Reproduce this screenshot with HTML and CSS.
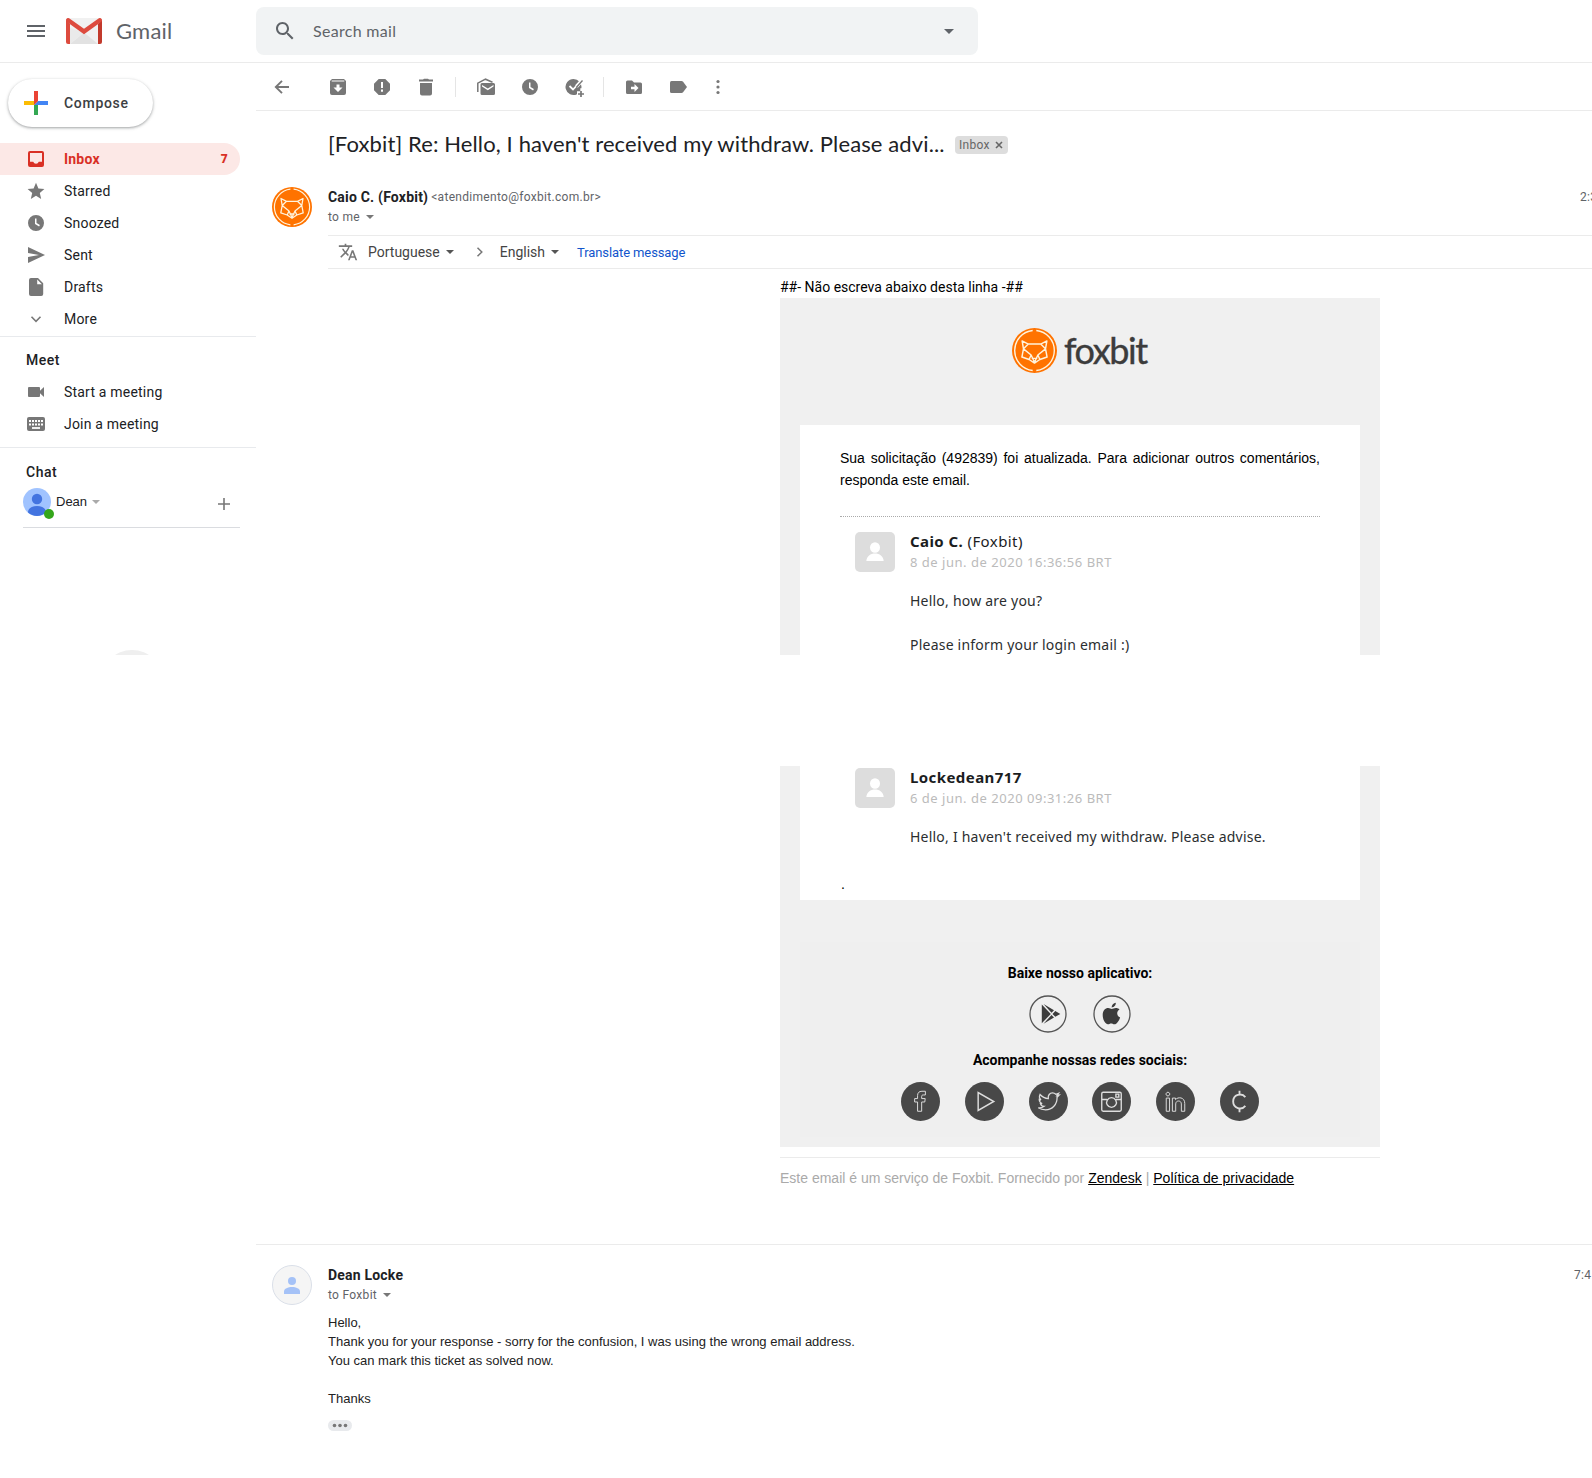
FILE: index.html
```html
<!DOCTYPE html>
<html lang="en">
<head>
<meta charset="utf-8">
<title>Gmail</title>
<link rel="stylesheet" href="styles.css">
</head>
<body>
<svg width="0" height="0" class="defs">
  <symbol id="fox" viewBox="0 0 40 40">
    <circle cx="20" cy="20" r="20" fill="#ff7300"/>
    <path d="M18.4 2.2A17.9 17.9 0 0 0 18.4 37.8M21.6 2.2A17.9 17.9 0 0 1 21.6 37.8" fill="none" stroke="#fff3dc" stroke-width="1.2"/>
    <path d="M9 11.500l5.500 2.800h11L31 11.500l-1.200 7 1.400 7.300-6.400 2.200-4.800 3.200-4.800-3.200-6.400-2.200 1.400-7.300zM14.500 14.300L10.200 18.500l6.800 5.500 3 6.500 3-6.500 6.800-5.500-4.300-4.200M15.200 28l1.800-4M24.800 28l-1.800-4M17.500 27h5" fill="none" stroke="#fff3dc" stroke-width="1.300" stroke-linejoin="round"/>
  </symbol>
  <symbol id="clock" viewBox="0 0 20 20"><path fill-rule="evenodd" d="M10 2a8 8 0 1 0 0 16 8 8 0 0 0 0-16zM9 5.500h1.500v4.600l3.400 2-.8 1.300L9 11z"/></symbol>
  <symbol id="caret" viewBox="0 0 8 4"><path d="M0 0h8L4 4z"/></symbol>
  <symbol id="person" viewBox="0 0 40 40"><ellipse cx="20" cy="15.500" rx="5" ry="5.300"/><path d="M11.300 29c.5-5 4.200-7.500 8.700-7.500s8.200 2.500 8.700 7.500z"/></symbol>
</svg>

<header class="header">
  <svg class="menu" viewBox="0 0 18 12"><path d="M0 0h18v2H0zM0 5h18v2H0zM0 10h18v2H0z"/></svg>
  <svg class="logo" viewBox="0 0 36 26">
    <path d="M2 0h32v26H2z" fill="#f1f1f1"/><path d="M4 26L18 14.500 32 26z" fill="#e2e2e2"/><path d="M18 14.500L4 26V10z" fill="#eaeaea"/>
    <path d="M0 2v22a2 2 0 0 0 2 2h2V6z" fill="#dd4b3e"/><path d="M36 2v22a2 2 0 0 1-2 2h-2V6z" fill="#c23a2c"/>
    <path d="M0 2C0 .3 2 -.6 3.500 .4L18 10.800 32.500 .4C34 -.6 36 .3 36 2c0 1-.4 1.600-1 2L18 16.200 1 4C.4 3.600 0 3 0 2z" fill="#dd4b3e"/>
  </svg>
  <span class="brand">Gmail</span>
  <div class="search">
    <svg class="search-icon" viewBox="0 0 24 24"><path d="M15.500 14h-.79l-.28-.27C15.410 12.590 16 11.110 16 9.500 16 5.910 13.090 3 9.500 3S3 5.910 3 9.500 5.910 16 9.500 16c1.610 0 3.090-.59 4.230-1.570l.27.28v.79l5 4.990L20.490 19l-4.990-5zm-6 0C7.010 14 5 11.990 5 9.500S7.010 5 9.500 5 14 7.010 14 9.500 11.990 14 9.500 14z"/></svg>
    <span class="placeholder">Search mail</span>
    <svg class="search-caret"><use href="#caret"/></svg>
  </div>
</header>

<div class="page">
  <aside class="sidebar">
    <div class="compose">
      <svg viewBox="0 0 24 24" class="plus"><path d="M0 10h10.500L14 10l-4 4H0z" fill="#fbbc04"/><path d="M10 14h4v10h-4z" fill="#34a853"/><path d="M14 10h10v4H10z" fill="#4285f4"/><path d="M10 0h4v10l-4 4z" fill="#ea4335"/></svg>
      <span>Compose</span>
    </div>
    <nav class="nav">
      <div class="item active"><svg viewBox="0 0 20 20"><path fill-rule="evenodd" d="M4 2h12a2 2 0 0 1 2 2v12a2 2 0 0 1-2 2H4a2 2 0 0 1-2-2V4a2 2 0 0 1 2-2zm0 2v8.800h3.200a3 3 0 0 0 5.600 0H16V4z"/></svg><span>Inbox</span><b>7</b></div>
      <div class="item"><svg viewBox="0 0 20 20"><path d="M10 1.800l2.400 5.700 6 .5-4.600 4 1.400 5.900L10 14.700l-5.200 3.200L6.200 12 1.600 8l6-.5z"/></svg><span>Starred</span></div>
      <div class="item"><svg><use href="#clock"/></svg><span>Snoozed</span></div>
      <div class="item"><svg viewBox="0 0 20 20"><path d="M2 2l17 8-17 8v-6l11-2L2 8z"/></svg><span>Sent</span></div>
      <div class="item"><svg viewBox="0 0 20 20"><path fill-rule="evenodd" d="M5 1h7l5.200 5.200V17a2 2 0 0 1-2 2H5a2 2 0 0 1-2-2V3a2 2 0 0 1 2-2zm6.200 1.500v4.700h4.700z"/></svg><span>Drafts</span></div>
      <div class="item"><svg viewBox="0 0 20 20"><path d="M5.500 7.800L10 12.300l4.500-4.500" fill="none" stroke="#777" stroke-width="1.600"/></svg><span>More</span></div>
    </nav>
    <section class="meet">
      <h2>Meet</h2>
      <div class="item"><svg viewBox="0 0 20 20"><path d="M3 5h10a1 1 0 0 1 1 1v2.800L18 5v10l-4-3.800V14a1 1 0 0 1-1 1H3a1 1 0 0 1-1-1V6a1 1 0 0 1 1-1z"/></svg><span>Start a meeting</span></div>
      <div class="item"><svg viewBox="0 0 20 20"><path d="M3 3h14a2 2 0 0 1 2 2v10a2 2 0 0 1-2 2H3a2 2 0 0 1-2-2V5a2 2 0 0 1 2-2z"/><path d="M3 7h14M3 10.500h14" stroke="#fff" stroke-width="2" stroke-dasharray="2 1"/><path d="M6 14h8" stroke="#fff" stroke-width="1.800"/></svg><span>Join a meeting</span></div>
    </section>
    <section class="chat">
      <h2>Chat</h2>
      <div class="user">
        <svg class="face" viewBox="0 0 32 31"><circle cx="14" cy="14" r="14" fill="#a0c3ff"/><circle cx="14" cy="11" r="5.200" fill="#4374e0"/><path d="M5 24.500c0-4.500 4-6.500 9-6.500s9 2 9 6.500A14 14 0 0 1 14 28a14 14 0 0 1-9-3.500z" fill="#4374e0"/><circle cx="26" cy="26" r="5" fill="#34a61b"/></svg>
        <span>Dean</span><svg class="dim-caret"><use href="#caret"/></svg>
        <svg class="add" viewBox="0 0 12 12"><path d="M6 0v12M0 6h12" stroke="#777" stroke-width="1.600"/></svg>
      </div>
      <div class="peek"><i></i></div>
    </section>
  </aside>

  <main class="main">
    <div class="toolbar">
      <span class="btn back"><svg viewBox="0 0 20 20"><path d="M17 10H4.500M10 3.800L3.800 10l6.200 6.200" fill="none" stroke="#777" stroke-width="1.900"/></svg></span>
      <span class="btn"><svg viewBox="0 0 20 20"><path fill-rule="evenodd" d="M4 2h12l2 2v12a2 2 0 0 1-2 2H4a2 2 0 0 1-2-2V4zm-.3 1.600v1h12.600v-1zM8.500 7.500v3h-3L10 15l4.500-4.500h-3v-3z"/></svg></span>
      <span class="btn"><svg viewBox="0 0 20 20"><path fill-rule="evenodd" d="M6.700 2h6.600L18 6.700v6.600L13.300 18H6.700L2 13.300V6.700zM9 5v6h2V5zm0 7.500v2.200h2v-2.200z"/></svg></span>
      <span class="btn"><svg viewBox="0 0 20 20"><path d="M3 2.500h4L8 1.800h4l1 .7h4v2H3zM4 6h12v10.500a2 2 0 0 1-2 2H6a2 2 0 0 1-2-2z"/></svg></span>
      <i class="divider"></i>
      <span class="btn"><svg viewBox="0 0 20 20"><path fill-rule="evenodd" d="M6 6h11.500A1.500 1.500 0 0 1 19 7.500v9a1.500 1.500 0 0 1-1.500 1.500H6a1.500 1.500 0 0 1-1.500-1.500v-9A1.500 1.500 0 0 1 6 6zm0 2v1.500l5.800 3.700 5.700-3.700V8l-5.700 3.600z"/><path d="M1.800 15V6.200L9.500 2.200l7 3" fill="none" stroke="#777" stroke-width="1.500"/></svg></span>
      <span class="btn"><svg><use href="#clock"/></svg></span>
      <span class="btn"><svg class="task" viewBox="0 0 20 20"><path d="M9.500 2a8 8 0 1 0 3.500 15.200v-3h3.300v-3h1.100A8 8 0 0 0 9.500 2z"/><path d="M12.500 9.500l5.500-6" fill="none" stroke="#fff" stroke-width="3.600"/><path d="M5.500 9l3.500 3.500L16.500 4.500" fill="none" stroke="#fff" stroke-width="1.800"/><path d="M12.500 10.300L18.500 3.500" stroke="#777" stroke-width="1.300"/><path d="M17 14v6M14 17h6" stroke="#777" stroke-width="1.700"/></svg></span>
      <i class="divider"></i>
      <span class="btn"><svg viewBox="0 0 20 20"><path fill-rule="evenodd" d="M3.500 3.500H8l2 2h6.500A1.500 1.500 0 0 1 18 7v8.500a1.500 1.500 0 0 1-1.500 1.500h-13A1.500 1.500 0 0 1 2 15.500V5a1.500 1.500 0 0 1 1.500-1.500zM10.500 7v2.800H7v2.400h3.500V15l4-4z"/></svg></span>
      <span class="btn"><svg viewBox="0 0 20 20"><path d="M3.500 4h10a2 2 0 0 1 1.600.8L19 10l-3.900 5.200a2 2 0 0 1-1.600.8h-10A1.500 1.500 0 0 1 2 14.500v-9A1.500 1.500 0 0 1 3.500 4z"/></svg></span>
      <span class="btn more"><svg viewBox="0 0 20 20"><circle cx="10" cy="4.500" r="1.600"/><circle cx="10" cy="10" r="1.600"/><circle cx="10" cy="15.500" r="1.600"/></svg></span>
    </div>

    <div class="subject"><h1>[Foxbit] Re: Hello, I haven't received my withdraw. Please advi...</h1><span class="label"><span>Inbox</span><svg viewBox="0 0 8 8"><path d="M1 1l6 6M7 1L1 7" stroke="#666" stroke-width="1.600"/></svg></span></div>

    <article class="message">
      <svg class="avatar"><use href="#fox"/></svg>
      <div class="content">
        <div class="from"><b>Caio C. (Foxbit)</b><span class="addr">&lt;atendimento@foxbit.com.br&gt;</span><time>2:3</time></div>
        <div class="to"><span>to me</span><svg><use href="#caret"/></svg></div>
        <div class="translate">
          <svg class="lang" viewBox="0 0 24 24"><path d="M12.870 15.070l-2.540-2.510.03-.03c1.740-1.940 2.980-4.170 3.710-6.530H17V4h-7V2H8v2H1v1.990h11.170C11.500 7.920 10.440 9.750 9 11.350 8.070 10.320 7.300 9.190 6.690 8h-2c.73 1.630 1.730 3.170 2.980 4.560l-5.090 5.020L4 19l5-5 3.110 3.110.76-2.040zM18.500 10h-2L12 22h2l1.120-3h4.750L21 22h2l-4.500-12zm-2.620 7l1.620-4.330L19.120 17h-3.240z"/></svg>
          <span>Portuguese</span><svg class="c"><use href="#caret"/></svg>
          <svg class="chev" viewBox="0 0 8 10"><path d="M1.500 .8L5.800 5 1.500 9.200" fill="none" stroke="#777" stroke-width="1.500"/></svg>
          <span>English</span><svg class="c"><use href="#caret"/></svg>
          <a>Translate message</a>
        </div>
        <div class="mail">
          <p class="noreply">##- Não escreva abaixo desta linha -##</p>
          <div class="sheet first">
            <div class="foxbit"><svg><use href="#fox"/></svg><span>foxbit</span></div>
            <div class="paper">
              <p class="intro">Sua solicitação (492839) foi atualizada. Para adicionar outros comentários, responda este email.</p>
              <div class="comment">
                <svg class="pic"><use href="#person"/></svg>
                <div><h3><b>Caio C.</b> (Foxbit)</h3><p class="date">8 de jun. de 2020 16:36:56 BRT</p><p class="say">Hello, how are you?</p><p class="say">Please inform your login email :)</p></div>
              </div>
            </div>
          </div>
          <div class="sheet second">
            <div class="paper">
              <div class="comment">
                <svg class="pic"><use href="#person"/></svg>
                <div><h3><b>Lockedean717</b></h3><p class="date">6 de jun. de 2020 09:31:26 BRT</p><p class="say">Hello, I haven't received my withdraw. Please advise.</p></div>
              </div>
              <p class="dot">.</p>
            </div>
            <div class="links">
              <h4>Baixe nosso aplicativo:</h4>
              <div class="apps">
                <svg viewBox="0 0 40 40"><circle cx="20" cy="20" r="18" fill="none" stroke="#555" stroke-width="1.300"/><path d="M13.800 10.500v18.800l9-9.400zM15.500 10l8 8.800 2.500-2.600zM15.500 29.800l8-8.800 2.500 2.600zM24.500 19.900l2.800-2.900 5 2.900-5 2.900z" fill="#3c3c3c"/></svg>
                <svg viewBox="0 0 40 40"><circle cx="20" cy="20" r="18" fill="none" stroke="#555" stroke-width="1.300"/><path d="M27.500 15.500c-3.300 2-3 6.400.6 8-1 3.200-3.300 6.800-5.600 6.800-1.400 0-1.800-.8-3.300-.8s-2 .8-3.300.8c-2.400 0-5.200-4.500-5.200-9.200 0-4.500 2.700-7 5.500-7 1.500 0 2.600.9 3.600.9s2.300-1 4.100-1c1.400 0 2.800.5 3.600 1.500zM19.600 13.500c0-2.600 2-4.600 4.200-4.800.2 2.400-1.800 4.800-4.200 4.800z" fill="#3c3c3c"/></svg>
              </div>
              <h4>Acompanhe nossas redes sociais:</h4>
              <div class="social">
                <svg viewBox="0 0 40 40"><circle cx="20" cy="20" r="20"/><path d="M17 30V20.500h-3V17h3v-3c0-3 1.500-4.500 4.500-4.500H25v3.800h-2c-1.400 0-1.800.4-1.800 1.600V17h3.600l-.4 3.500h-3.200V30z"/></svg>
                <svg viewBox="0 0 40 40"><circle cx="20" cy="20" r="20"/><path stroke-width="1.500" d="M13.500 10.800v18.400l16-9.200z"/></svg>
                <svg viewBox="0 0 40 40"><circle cx="20" cy="20" r="20"/><path stroke-width="1.300" d="M9.500 26.500c2.500.3 4.500-.3 6-1.500-2 0-3.300-1.200-3.800-2.800h1.800c-2-.8-3-2.300-3-4.400l1.800.5c-1.800-1.600-2-3.500-1-5.500 2.300 2.600 5 4 8.500 4.200-.6-3.400 1.500-5.800 4.300-5.800 1.400 0 2.500.5 3.400 1.400l2.800-1-1.600 2.300 2.200-.5-2.100 2.200c.2 7.500-5 13-11.800 13-2.800 0-5.300-.7-7.500-2.100z"/></svg>
                <svg viewBox="0 0 40 40"><circle cx="20" cy="20" r="20"/><path stroke-width="1.400" d="M11.500 10.500h17a1.500 1.500 0 0 1 1.500 1.500v16.500a1.500 1.500 0 0 1-1.500 1.500h-17a1.500 1.500 0 0 1-1.500-1.500V12a1.500 1.500 0 0 1 1.500-1.500zM10 18h5.500M24.500 18H30M24.500 12.500h3v3h-3zM20 16a5 5 0 1 0 .01 0z"/></svg>
                <svg viewBox="0 0 40 40"><circle cx="20" cy="20" r="20"/><path d="M10.500 16.500h3.400V30h-3.400zM12.200 10.500a1.900 1.900 0 1 0 .01 0zM16.800 16.500H20v1.600c2.500-3.200 9.500-2.700 9.500 3.900v8H26v-7.500c0-4-5.800-4-5.800 0V30h-3.400z"/></svg>
                <svg viewBox="0 0 40 40"><circle cx="20" cy="20" r="20"/><path stroke-width="1.900" d="M26 15.500c-4-5-12.500-2.500-12.500 4.500s8.500 9.500 12.500 4.500M20 9v4M20 27v4"/></svg>
              </div>
            </div>
          </div>
          <p class="powered">Este email é um serviço de Foxbit. Fornecido por <a>Zendesk</a> | <a>Política de privacidade</a></p>
        </div>
      </div>
    </article>

    <article class="message reply">
      <svg class="avatar" viewBox="0 0 40 40"><circle cx="20" cy="20" r="19.500" fill="#f5f5f5" stroke="#dadfe8"/><circle cx="20" cy="16" r="4" fill="#a5c2f7"/><path d="M12 29v-2.500c0-3 4-4.500 8-4.500s8 1.500 8 4.500V29z" fill="#a5c2f7"/></svg>
      <div class="content">
        <div class="from"><b>Dean Locke</b><time>7:4</time></div>
        <div class="to"><span>to Foxbit</span><svg><use href="#caret"/></svg></div>
        <div class="body">Hello,<br>Thank you for your response - sorry for the confusion, I was using the wrong email address.<br>You can mark this ticket as solved now.<br><br>Thanks</div>
        <svg class="dots" viewBox="0 0 24 11"><rect width="24" height="11" rx="5.500" fill="#e8eaed"/><circle cx="6.500" cy="5.500" r="1.800"/><circle cx="12" cy="5.500" r="1.800"/><circle cx="17.500" cy="5.500" r="1.800"/></svg>
      </div>
    </article>
  </main>
</div>
</body>
</html>
```
FILE: styles.css
```css
* { box-sizing: border-box; }
html, body { margin: 0; padding: 0; }
body { width: 1592px; height: 1478px; overflow: hidden; background: #fff; color: #202124; font-family: Roboto, sans-serif; font-size: 14px; }
h1, h2, h3, h4, p { margin: 0; font-weight: 400; }
svg { display: block; flex: none; fill: #777; }
.defs { position: absolute; }

.header { display: flex; align-items: center; height: 63px; border-bottom: 1px solid #ebebeb; }
.menu { width: 18px; height: 12px; margin-left: 27px; fill: #5f6368; }
.logo { width: 36px; height: 26px; margin-left: 21px; }
.brand { width: 140px; margin-left: 14px; color: #5f6368; font: 22px/28px Lato, sans-serif; letter-spacing: .2px; }
.search { display: flex; align-items: center; width: 722px; height: 48px; border-radius: 8px; background: #f1f3f4; }
.search svg { fill: #5f6368; }
.search-icon { width: 24px; height: 24px; margin-left: 17px; }
.placeholder { margin-left: 16px; color: #5f6368; font: 16px/24px Lato, sans-serif; letter-spacing: .3px; }
.search-caret { width: 10px; height: 5px; margin-left: auto; margin-right: 24px; }

.page { display: flex; }
.sidebar { flex: none; width: 256px; padding-top: 16px; }
.compose { display: flex; align-items: center; width: 145px; height: 48px; margin: 0 0 16px 8px; padding-left: 16px; border-radius: 24px; box-shadow: 0 1px 2px rgba(60,64,67,.3), 0 1px 3px 1px rgba(60,64,67,.15); color: #3c4043; font: 500 14px/20px Roboto, sans-serif; letter-spacing: .7px; }
.plus { width: 24px; height: 24px; margin-right: 16px; }
.item { display: flex; align-items: center; width: 240px; height: 32px; padding: 0 12px 0 26px; letter-spacing: .2px; }
.item svg { width: 20px; height: 20px; margin-right: 18px; }
.item b { margin-left: auto; font-size: 12px; }
.active { border-radius: 0 16px 16px 0; background: #fce8e6; color: #d93025; font-weight: 700; }
.active svg { fill: #d93025; }
.nav { height: 194px; border-bottom: 1px solid #e8eaed; }
.meet { height: 111px; padding-top: 7px; border-bottom: 1px solid #e8eaed; }
.sidebar h2 { padding-left: 26px; font: 500 14px/32px Roboto, sans-serif; letter-spacing: .5px; }
.chat { padding-top: 8px; }
.user { display: flex; height: 40px; margin: 0 16px 0 23px; border-bottom: 1px solid #dadce0; font: 13px/28px "Liberation Sans", sans-serif; }
.face { width: 32px; height: 31px; margin-right: 1px; }
.dim-caret { width: 8px; height: 4px; margin: 12px 0 0 5px; fill: #aaa; }
.add { width: 12px; height: 12px; margin: 10px 10px 0 auto; }
.peek { height: 5px; margin-top: 122px; overflow: hidden; }
.peek i { display: block; width: 62px; height: 62px; margin-left: 101px; border-radius: 50%; background: #efefef; }

.main { flex: none; width: 1336px; }
.toolbar { display: flex; align-items: center; height: 48px; padding-left: 4px; border-bottom: 1px solid #ebebeb; }
.btn { display: flex; justify-content: center; width: 44px; }
.btn svg { width: 20px; height: 20px; }
.back { margin-right: 12px; }
.more { width: 36px; }
.divider { width: 1px; height: 20px; margin: 0 8px 0 7px; background: #e5e5e5; }
.subject { display: flex; align-items: center; height: 68px; padding-left: 72px; }
.subject h1 { padding-bottom: 2px; font: 22px/28px Lato, sans-serif; letter-spacing: .112px; white-space: nowrap; }
.label { display: flex; align-items: center; height: 18px; margin-left: 10.500px; padding: 0 5px 0 4px; border-radius: 4px; background: #ddd; color: #666; font-size: 12px; letter-spacing: .3px; }
.label svg { width: 8px; height: 8px; margin-left: 5px; }

.message { display: flex; height: 1066px; padding: 8px 0 0 16px; border-bottom: 1px solid #ebebeb; }
.avatar { width: 40px; height: 40px; margin-right: 16px; }
.content { flex: none; width: 1264px; }
.from { display: flex; height: 20px; line-height: 20px; letter-spacing: .2px; }
.addr { margin-left: 3px; color: #5f6368; font-size: 12px; letter-spacing: .3px; }
.from time { width: 12px; margin-left: auto; color: #5f6368; font-size: 12px; letter-spacing: .3px; white-space: nowrap; }
.to { display: flex; align-items: center; height: 20px; color: #5f6368; font-size: 12px; letter-spacing: .3px; }
.to svg { width: 8px; height: 4px; margin-left: 6px; }
.translate { display: flex; align-items: center; height: 34px; margin-top: 8px; padding-left: 10px; border: solid #ebebeb; border-width: 1px 0; color: #444; }
.lang { width: 20px; height: 20px; margin-right: 10px; }
.c { width: 8px; height: 4px; margin-left: 6px; fill: #555; }
.chev { width: 8px; height: 10px; margin: 0 16px 0 22px; }
.translate a { margin-left: 18px; color: #15c; font-size: 13px; letter-spacing: -.1px; }

.mail { width: 600px; margin: 7px 0 0 452px; color: #000; }
.noreply { height: 22px; line-height: 22px; white-space: nowrap; }
.sheet { background: #f0f0f0; }
.paper { margin: 0 20px; padding: 0 40px; background: #fff; }
.first { height: 357px; padding-top: 30px; overflow: hidden; }
.foxbit { display: flex; height: 97px; margin-left: 232px; }
.foxbit svg { width: 45px; height: 45px; }
.foxbit span { margin-left: 7px; color: #3c3c3c; font: 36px/44px Lato, sans-serif; letter-spacing: -1.400px; -webkit-text-stroke: .4px #3c3c3c; }
.first .paper { height: 230px; padding-top: 22px; }
.intro { height: 70px; border-bottom: 1px dotted #aaa; font: 14px/22px "Liberation Sans", sans-serif; text-align: justify; }
.comment { display: flex; padding-left: 15px; font-family: "Noto Sans", sans-serif; color: #2b2e2f; }
.first .comment { padding-top: 13px; }
.pic { width: 40px; height: 40px; margin: 2px 15px 0 0; border-radius: 5px; background: #ddd; fill: #fff; }
.comment h3 { color: #1b1d1e; font-size: 15px; line-height: 22px; letter-spacing: .42px; }
.date { height: 38px; padding-top: 1px; color: #bbb; font-size: 13px; line-height: 18px; letter-spacing: .52px; }
.say { height: 44px; font-size: 14px; line-height: 22px; letter-spacing: .22px; white-space: nowrap; }
.second { height: 381px; margin-top: 111px; }
.second .paper { height: 134px; }
.dot { margin-top: 7px; padding-left: 1px; font: 14px/22px "Liberation Sans", sans-serif; }
.second .comment { height: 104px; }
.second .dot { margin-top: 3px; }
.links { height: 195px; margin: 42px 20px 0; padding-top: 20px; background: #efefef; text-align: center; }
.links h4 { height: 22px; font-weight: 700; line-height: 22px; }
.apps { display: flex; justify-content: center; gap: 24px; height: 65px; padding-top: 10px; }
.apps svg { width: 40px; height: 40px; }
.social { display: flex; justify-content: center; gap: 24.700px; padding-top: 10.500px; }
.social svg { width: 39px; height: 39px; fill: #484848; }
.social path { fill: none; stroke: #ddd; }
.powered { margin-top: 10px; padding-top: 10px; border-top: 1px solid #ebebeb; color: #aaa; font: 14px/20px "Liberation Sans", sans-serif; white-space: nowrap; }
.powered a { color: #000; text-decoration: underline; }

.reply { height: auto; padding-top: 20px; border: 0; }
.reply .from time { width: 18px; }
.body { margin-top: 8px; color: #222; font: 13px/19px "Liberation Sans", sans-serif; }
.dots { width: 24px; height: 11px; margin-top: 12px; }
```
